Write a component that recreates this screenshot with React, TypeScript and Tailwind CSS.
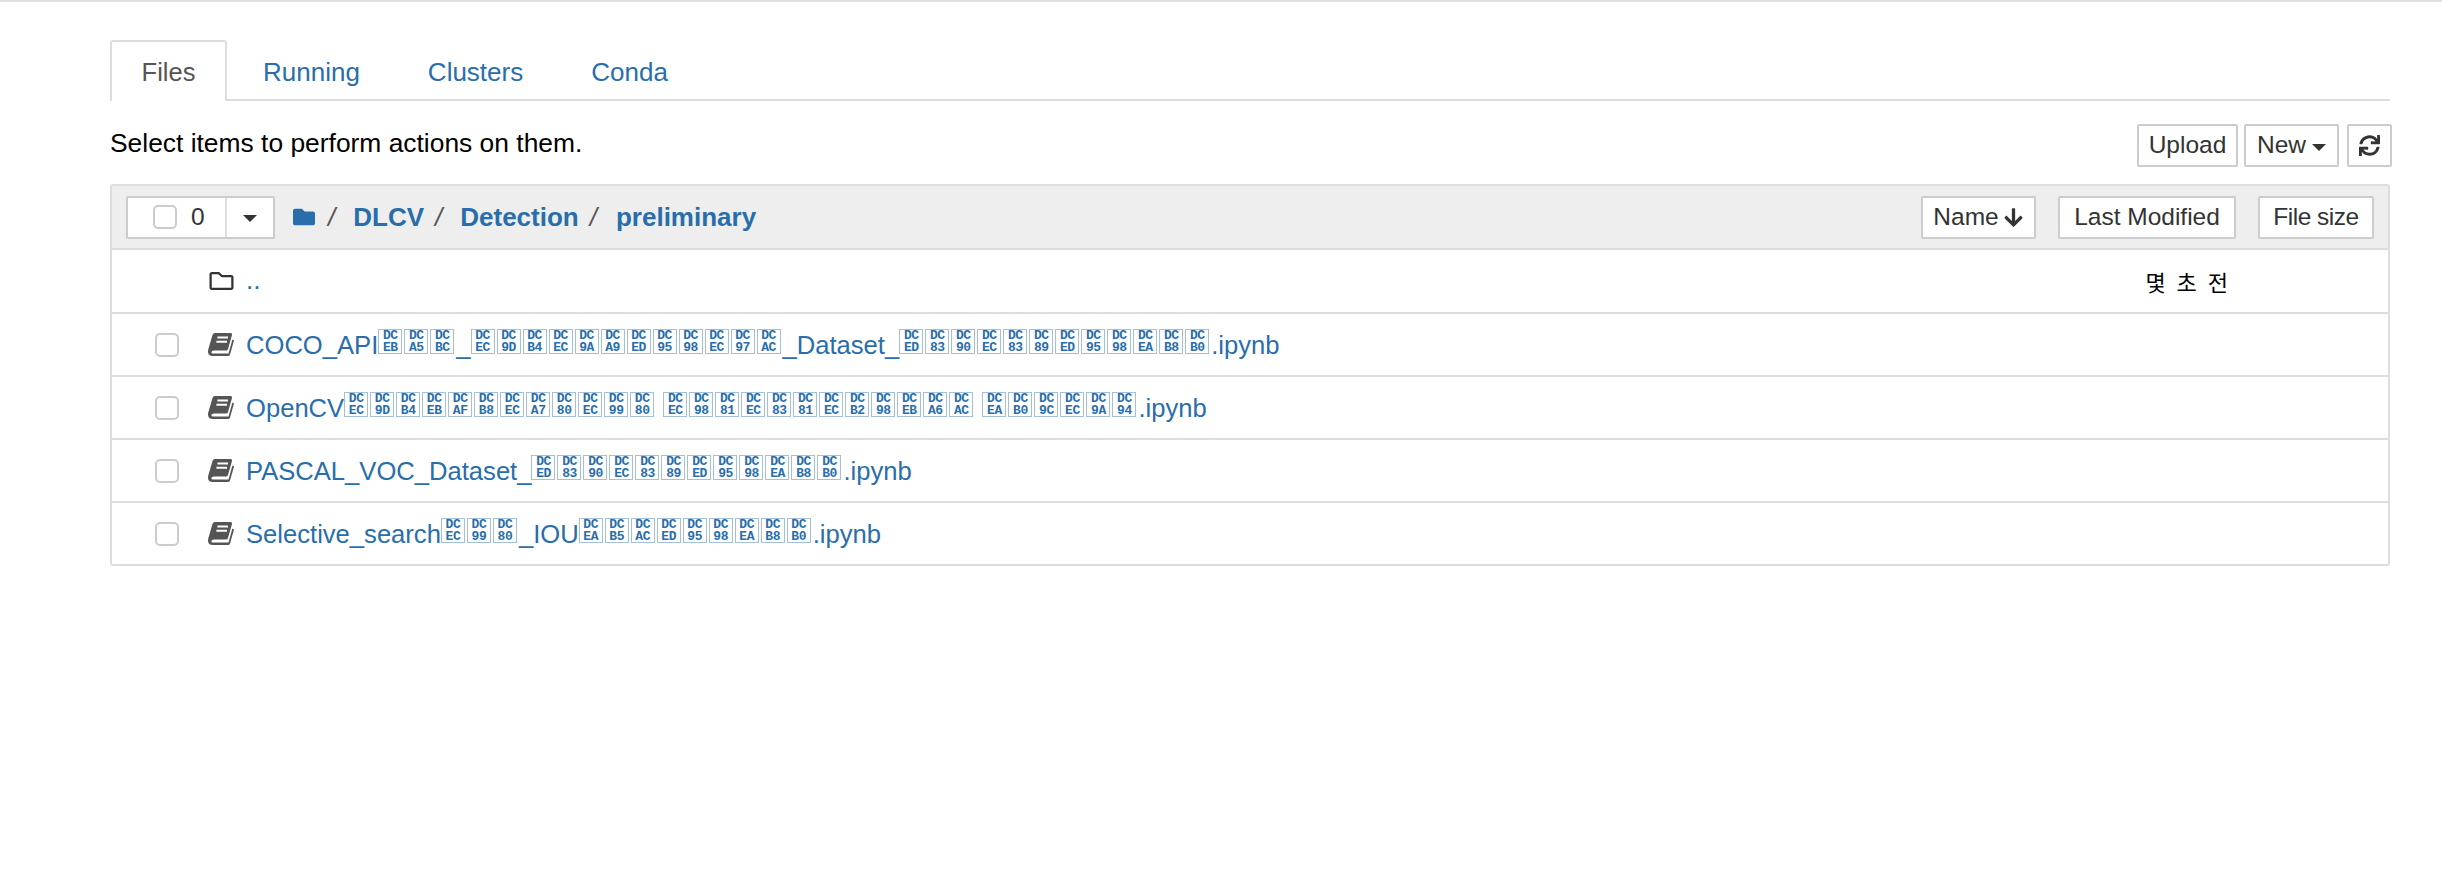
import { FaArrowDown, FaFolder, FaRegFolder, FaSync } from 'react-icons/fa';

const tabs = ['Running', 'Clusters', 'Conda'];

// filename parts: plain strings stay text, arrays are the missing-glyph boxes
const notebooks: (string | string[])[][] = [
  [
    'COCO_API',
    ['EB', 'A5', 'BC'],
    '_',
    ['EC', '9D', 'B4', 'EC', '9A', 'A9', 'ED', '95', '98', 'EC', '97', 'AC'],
    '_Dataset_',
    ['ED', '83', '90', 'EC', '83', '89', 'ED', '95', '98', 'EA', 'B8', 'B0'],
    '.ipynb',
  ],
  [
    'OpenCV',
    ['EC', '9D', 'B4', 'EB', 'AF', 'B8', 'EC', 'A7', '80', 'EC', '99', '80'],
    ' ',
    ['EC', '98', '81', 'EC', '83', '81', 'EC', 'B2', '98', 'EB', 'A6', 'AC'],
    ' ',
    ['EA', 'B0', '9C', 'EC', '9A', '94'],
    '.ipynb',
  ],
  [
    'PASCAL_VOC_Dataset_',
    ['ED', '83', '90', 'EC', '83', '89', 'ED', '95', '98', 'EA', 'B8', 'B0'],
    '.ipynb',
  ],
  [
    'Selective_search',
    ['EC', '99', '80'],
    '_IOU',
    ['EA', 'B5', 'AC', 'ED', '95', '98', 'EA', 'B8', 'B0'],
    '.ipynb',
  ],
];

function Tofu({ hex }: { hex: string }) {
  return (
    <span className="mr-[2px] inline-block h-[25px] w-[24px] border border-[#a3bfda] text-center align-[2.5px] font-['Liberation_Mono',monospace] text-[13px] leading-[12px] font-bold tracking-[-0.5px]">
      <span className="block">DC</span>
      <span className="block">{hex}</span>
    </span>
  );
}

function Caret({ className }: { className: string }) {
  return <span className={`inline-block border-x-[7px] border-t-[7px] border-x-transparent border-t-[#333] ${className}`} />;
}

function Btn({ children, className }: { children: React.ReactNode; className: string }) {
  return (
    <div className={`flex h-[43px] items-center justify-center rounded-[2px] border-2 border-[#ccc] bg-white text-[24.5px] text-[#333] ${className}`}>
      {children}
    </div>
  );
}

function BookIcon() {
  return (
    <svg viewBox="0 0 26 23" className="h-[23px] w-[26px] text-[#555]" fill="currentColor">
      <path d="M7 0H22.5Q24.5 0 24 2L20 16Q19.6 17.5 18 17.5H6Q3.6 17.5 3.4 19T6 20.5H20.5L24.4 6.5L26 7.5L22 21.5Q21.5 23 20 23H5Q0 23 0 18.5Q0 17.5 .4 16L4.5 2Q5 0 7 0Z" />
      <path d="M9.4 4.6H20M8.4 8.8H19" stroke="#fff" strokeWidth="2" fill="none" />
    </svg>
  );
}

export default function App() {
  return (
    <div className="min-h-[874px] border-t-2 border-[#e0e0e0] bg-white pt-[38px] pr-[52px] pl-[110px] font-['Liberation_Sans',Arial,sans-serif] text-[26.4px] text-black">
      <div className="flex h-[61px] border-b-2 border-[#ddd]">
        <div className="h-[61px] w-[117px] rounded-t-[3px] border-2 border-b-0 border-[#ddd] bg-white pt-[16px] text-center text-[25.5px] leading-[28px] text-[#555]">
          Files
        </div>
        <div className="flex gap-[68px] pt-[18px] pl-[36px] text-[26px] leading-[28px] text-[#296eaa]">
          {tabs.map((t) => (
            <span key={t}>{t}</span>
          ))}
        </div>
      </div>

      <div className="mt-[23px] flex h-[43px] items-start justify-between">
        <span className="mt-[5px] leading-[28px]">Select items to perform actions on them.</span>
        <div className="mr-[-2px] flex gap-[8px]">
          <Btn className="mr-[-2px] w-[101px]">Upload</Btn>
          <Btn className="w-[95px] gap-[6px]">
            New <Caret className="mt-[3px]" />
          </Btn>
          <Btn className="w-[45px]">
            <FaSync className="h-[21px] w-[21px]" />
          </Btn>
        </div>
      </div>

      <div className="mt-[17px] rounded-[3px] border-2 border-[#ddd]">
        <div className="flex h-[62px] items-center bg-[#eee] pr-[14px] pl-[14px]">
          <div className="flex h-[43px] w-[149px] rounded-[2px] border-2 border-[#ccc] bg-white text-[24.5px]">
            <div className="flex w-[99px] items-center border-r-2 border-[#ddd] pl-[25px]">
              <span className="h-[24px] w-[24px] rounded-[5px] border-2 border-[#ccc]" />
              <span className="ml-[14px] text-[#333]">0</span>
            </div>
            <div className="flex flex-1 items-center justify-center">
              <Caret className="mt-[3px]" />
            </div>
          </div>
          <div className="ml-[16px] flex items-center text-[26px] font-bold text-[#296eaa]">
            <FaFolder className="h-[22px] w-[26px]" />
            <span className="mr-[18px] ml-[11px] font-normal text-[#555] italic">/</span>
            <span>DLCV</span>
            <span className="mr-[18px] ml-[11px] font-normal text-[#555] italic">/</span>
            <span>Detection</span>
            <span className="mr-[19px] ml-[11px] font-normal text-[#555] italic">/</span>
            <span>preliminary</span>
          </div>
          <div className="ml-auto flex">
            <Btn className="w-[115px] gap-[4px]">
              Name <FaArrowDown className="h-[21px] w-[21px]" />
            </Btn>
            <Btn className="ml-[22px] w-[178px]">Last Modified</Btn>
            <Btn className="ml-[22px] w-[116px] tracking-[-0.5px]">File size</Btn>
          </div>
        </div>

        <div className="flex h-[64px] items-center border-t-2 border-[#ddd] pl-[96px]">
          <FaRegFolder className="h-[24px] w-[27px] text-[#333]" />
          <span className="ml-[11px] text-[#296eaa]">..</span>
          <span className="mr-[157px] ml-auto font-['Noto_Sans_CJK_KR',sans-serif] text-[22px] tracking-[3px]">몇 초 전</span>
        </div>

        {notebooks.map((parts, i) => (
          <div key={i} className="flex h-[63px] items-center border-t-2 border-[#ddd] pl-[43px]">
            <span className="h-[24px] w-[24px] rounded-[5px] border-2 border-[#ccc]" />
            <span className="ml-[29px] flex">
              <BookIcon />
            </span>
            <span className="mt-[1px] ml-[12px] whitespace-pre text-[25.6px] text-[#296eaa]">
              {parts.map((p, j) =>
                typeof p === 'string' ? p : p.map((h, k) => <Tofu key={`${j}-${k}`} hex={h} />),
              )}
            </span>
          </div>
        ))}
      </div>
    </div>
  );
}
